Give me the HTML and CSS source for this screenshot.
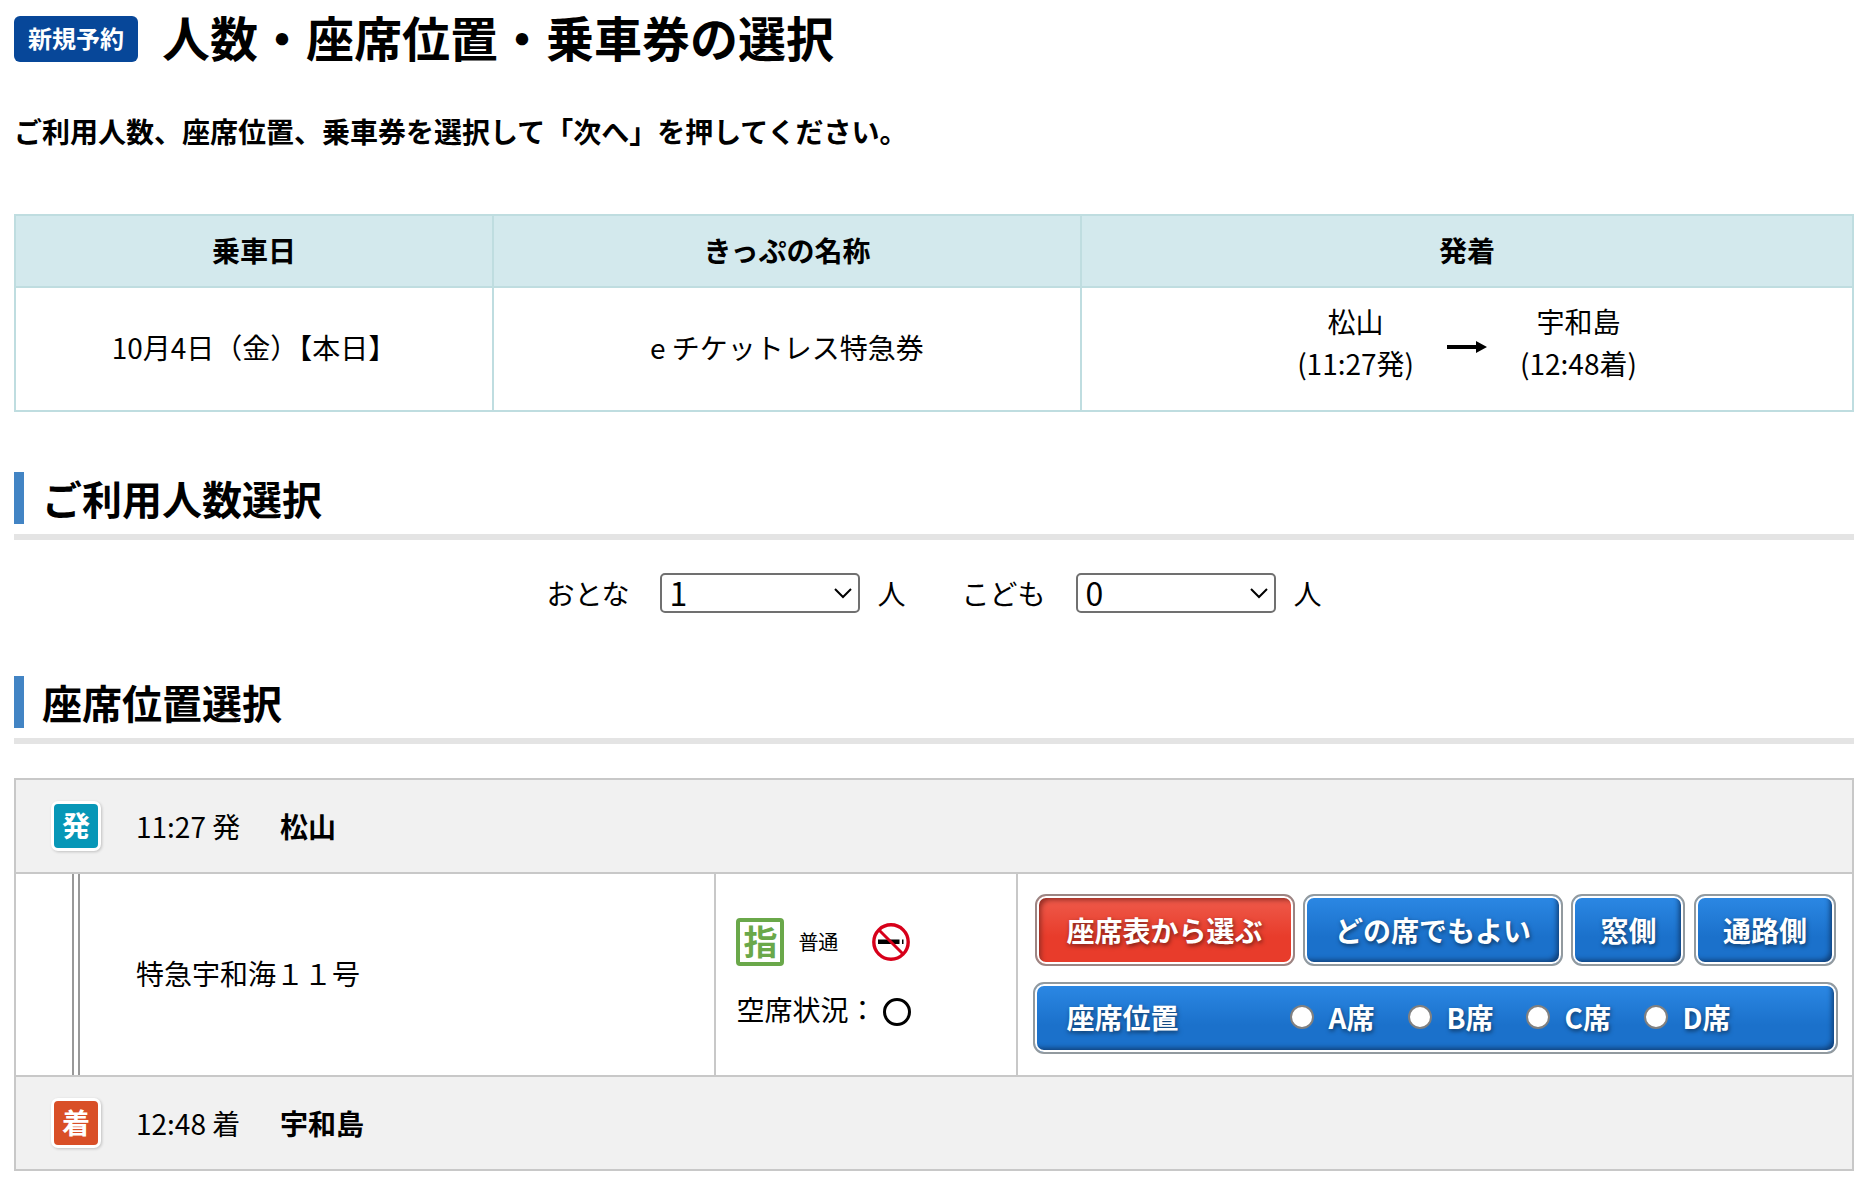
FILE: index.html
```html
<!DOCTYPE html>
<html lang="ja">
<head>
<meta charset="utf-8">
<meta name="viewport" content="width=device-width, initial-scale=1">
<title>人数・座席位置・乗車券の選択</title>
<link rel="stylesheet" href="styles.css">
</head>
<body>
<main class="page">
  <header class="page-header">
    <span class="tag">新規予約</span>
    <h1 class="page-title">人数・座席位置・乗車券の選択</h1>
  </header>
  <p class="lead">ご利用人数、座席位置、乗車券を選択して「次へ」を押してください。</p>

  <table class="summary">
    <thead>
      <tr>
        <th class="col-date" scope="col">乗車日</th>
        <th class="col-name" scope="col">きっぷの名称</th>
        <th scope="col">発着</th>
      </tr>
    </thead>
    <tbody>
      <tr>
        <td>10月4日（金）【本日】</td>
        <td>e チケットレス特急券</td>
        <td>
          <div class="trip">
            <span>松山<br>(11:27発)</span>
            <svg class="trip-arrow" viewBox="0 0 40 12" aria-label="から"><path d="M0 4H29V0L40 6L29 12V8H0Z"/></svg>
            <span>宇和島<br>(12:48着)</span>
          </div>
        </td>
      </tr>
    </tbody>
  </table>

  <h2 class="section-title">ご利用人数選択</h2>
  <form class="party">
    <div class="party-item">
      <label for="adult">おとな</label>
      <select id="adult" class="count"><option>0</option><option selected>1</option><option>2</option><option>3</option><option>4</option></select>
      <span class="unit">人</span>
    </div>
    <div class="party-item">
      <label for="child">こども</label>
      <select id="child" class="count"><option selected>0</option><option>1</option><option>2</option><option>3</option><option>4</option></select>
      <span class="unit">人</span>
    </div>
  </form>

  <h2 class="section-title">座席位置選択</h2>
  <section class="route">
    <div class="stop">
      <span class="mark mark-dep">発</span>
      <span class="stop-time">11:27 発</span>
      <strong>松山</strong>
    </div>
    <div class="train">
      <div class="train-name">
        <span class="rail"></span>
        <span class="train-label">特急宇和海１１号</span>
      </div>
      <div class="train-info">
        <div class="facility">
          <span class="reserved">指</span>
          <span class="seat-class">普通</span>
          <svg class="no-smoking" viewBox="0 0 38 38" role="img" aria-label="禁煙">
            <circle cx="19" cy="19" r="17" fill="#fff"/>
            <path d="M6 16.500H27.500V21H6ZM30 16.500h1.500V21H30Z"/>
            <circle cx="19" cy="19" r="17.200" fill="none" stroke="#d7001a" stroke-width="3.400"/>
            <path d="M7 7L31 31" stroke="#d7001a" stroke-width="3"/>
          </svg>
        </div>
        <div class="vacancy">
          <span>空席状況：</span>
          <svg class="vacancy-mark" viewBox="0 0 28 28" role="img" aria-label="空席あり"><circle cx="14" cy="14" r="12.500" fill="none" stroke="#000" stroke-width="3"/></svg>
        </div>
      </div>
      <div class="seat-choice">
        <div class="seat-buttons">
          <button type="button" class="btn btn-wide btn-selected">座席表から選ぶ</button>
          <button type="button" class="btn btn-wide">どの席でもよい</button>
          <button type="button" class="btn">窓側</button>
          <button type="button" class="btn">通路側</button>
        </div>
        <div class="btn seat-letters" role="radiogroup" aria-labelledby="seat-pos">
          <span id="seat-pos" class="seat-letters-title">座席位置</span>
          <label class="letter"><input type="radio" name="seat" value="A">A席</label>
          <label class="letter"><input type="radio" name="seat" value="B">B席</label>
          <label class="letter"><input type="radio" name="seat" value="C">C席</label>
          <label class="letter"><input type="radio" name="seat" value="D">D席</label>
        </div>
      </div>
    </div>
    <div class="stop">
      <span class="mark mark-arr">着</span>
      <span class="stop-time">12:48 着</span>
      <strong>宇和島</strong>
    </div>
  </section>
</main>
</body>
</html>
```
FILE: styles.css
```css
*,
*::before {
  box-sizing: border-box;
}

body {
  margin: 0;
  background: #fff;
  color: #000;
  font-family: "Noto Sans CJK JP", sans-serif;
  font-size: 28px;
  line-height: 42px;
}

.page {
  padding: 0 8px 12px 14px;
}

.page-header {
  display: flex;
  align-items: center;
  gap: 24px;
  height: 78px;
}

.tag {
  height: 46px;
  padding: 0 14px;
  border-radius: 6px;
  background: #074799;
  color: #fff;
  font-size: 24px;
  font-weight: 700;
  line-height: 44px;
}

.page-title {
  margin: 0;
  padding-bottom: 6px;
  font-size: 48px;
  line-height: 72px;
}

.lead {
  margin: 32px 0 62px;
  font-weight: 700;
}

.summary {
  width: 100%;
  border-collapse: collapse;
  table-layout: fixed;
  text-align: center;
}

.summary th,
.summary td {
  border: 2px solid #bfdde0;
  padding: 0 0 4px;
}

.summary th {
  height: 72px;
  padding-bottom: 2px;
  background: #d3e9ed;
}

.summary td {
  height: 124px;
}

.col-date {
  width: 26%;
}

.col-name {
  width: 32%;
}

.trip {
  display: flex;
  justify-content: center;
  align-items: center;
  gap: 33px;
  padding-bottom: 10px;
}

.trip-arrow {
  width: 40px;
  height: 12px;
  margin-top: 10px;
}

.section-title {
  display: flex;
  align-items: center;
  gap: 18px;
  margin: 60px 0 0;
  padding-bottom: 10px;
  border-bottom: 6px solid #e4e4e4;
  font-size: 40px;
  line-height: 52px;
}

.section-title::before {
  content: "";
  width: 10px;
  height: 52px;
  background: #4284c4;
}

.party {
  display: flex;
  justify-content: center;
  gap: 56px;
  margin: 32px 0 62px;
}

.party-item {
  display: flex;
  align-items: center;
}

.count {
  appearance: none;
  width: 200px;
  height: 40px;
  margin: 0 18px 0 30px;
  padding: 0 8px 2px;
  border: 2px solid #707070;
  border-radius: 5px;
  background: #fff url("data:image/svg+xml,%3Csvg xmlns='http://www.w3.org/2000/svg' viewBox='0 0 18 11'%3E%3Cpath d='M1 1L9 9L17 1' fill='none' stroke='%23000' stroke-width='2'/%3E%3C/svg%3E") no-repeat right 6px center / 18px 11px;
  color: #000;
  font-family: inherit;
  font-size: 32px;
  line-height: 34px;
}

.route {
  margin-top: 34px;
  border: 2px solid #c8c8c8;
}

.stop {
  display: flex;
  align-items: center;
  height: 92px;
  padding-left: 35px;
  background: #f1f1f1;
}

.mark {
  width: 50px;
  height: 50px;
  margin-right: 35px;
  border: 3px solid #fff;
  border-radius: 7px;
  box-shadow: 1px 1px 3px rgba(0, 0, 0, 0.2);
  color: #fff;
  font-weight: 700;
  line-height: 42px;
  text-align: center;
}

.mark-dep {
  background: #0797b7;
}

.mark-arr {
  background: #d94f27;
}

.stop-time {
  width: 144px;
}

.train {
  display: grid;
  grid-template-columns: 698fr 301fr 836fr;
  border: solid #c8c8c8;
  border-width: 2px 0;
}

.train-name {
  display: flex;
  align-items: center;
  gap: 56px;
  padding-left: 56px;
}

.rail {
  align-self: stretch;
  width: 8px;
  border: solid #999;
  border-width: 0 2px;
}

.train-label {
  padding-bottom: 4px;
}

.train-info {
  display: flex;
  flex-direction: column;
  justify-content: center;
  gap: 22px;
  padding: 0 0 2px 20px;
  border-left: 2px solid #c8c8c8;
}

.facility {
  display: flex;
  align-items: center;
}

.reserved {
  width: 48px;
  height: 48px;
  border: 4px solid #6aa84a;
  border-radius: 4px;
  color: #6aa84a;
  font-size: 34px;
  font-weight: 700;
  line-height: 38px;
  text-align: center;
}

.seat-class {
  margin: 0 34px 0 14px;
  font-size: 20px;
}

.no-smoking {
  width: 38px;
  height: 38px;
}

.vacancy {
  display: flex;
  align-items: center;
  gap: 7px;
}

.vacancy-mark {
  width: 28px;
  height: 28px;
  margin-top: 6px;
}

.seat-choice {
  display: flex;
  flex-direction: column;
  gap: 16px;
  padding: 20px 14px 21px 15px;
  border-left: 2px solid #c8c8c8;
}

.seat-buttons {
  display: flex;
  justify-content: space-between;
  padding: 0 2px;
}

.btn {
  height: 72px;
  padding: 0 24px;
  border: 2px solid #929a9f;
  border-radius: 11px;
  outline: 2px solid #fff;
  outline-offset: -4px;
  background: linear-gradient(#2a86e2 4px, #1b71cb 60%);
  box-shadow: inset -4px -4px 5px #104079;
  color: #fff;
  font-family: inherit;
  font-size: 28px;
  font-weight: 700;
  line-height: 42px;
  text-shadow: 1px 2px 4px rgba(0, 0, 0, 0.5);
}

.seat-buttons .btn {
  padding: 0 27px;
}

.seat-buttons .btn-wide {
  padding: 0 30px;
}

.btn-selected {
  border-color: #9c8583;
  background: linear-gradient(#ee5949 4px, #e83c2b 60%);
  box-shadow: inset 4px 4px 5px #952e25;
}

.seat-letters {
  display: flex;
  align-items: center;
  padding: 0 32px 2px;
}

.seat-letters-title {
  width: 223px;
}

.letter {
  display: flex;
  align-items: center;
  gap: 15px;
  width: 118px;
}

.letter input {
  appearance: none;
  width: 24px;
  height: 24px;
  margin: 0;
  border: 2px solid #808080;
  border-radius: 50%;
  background: #fff;
}
```
